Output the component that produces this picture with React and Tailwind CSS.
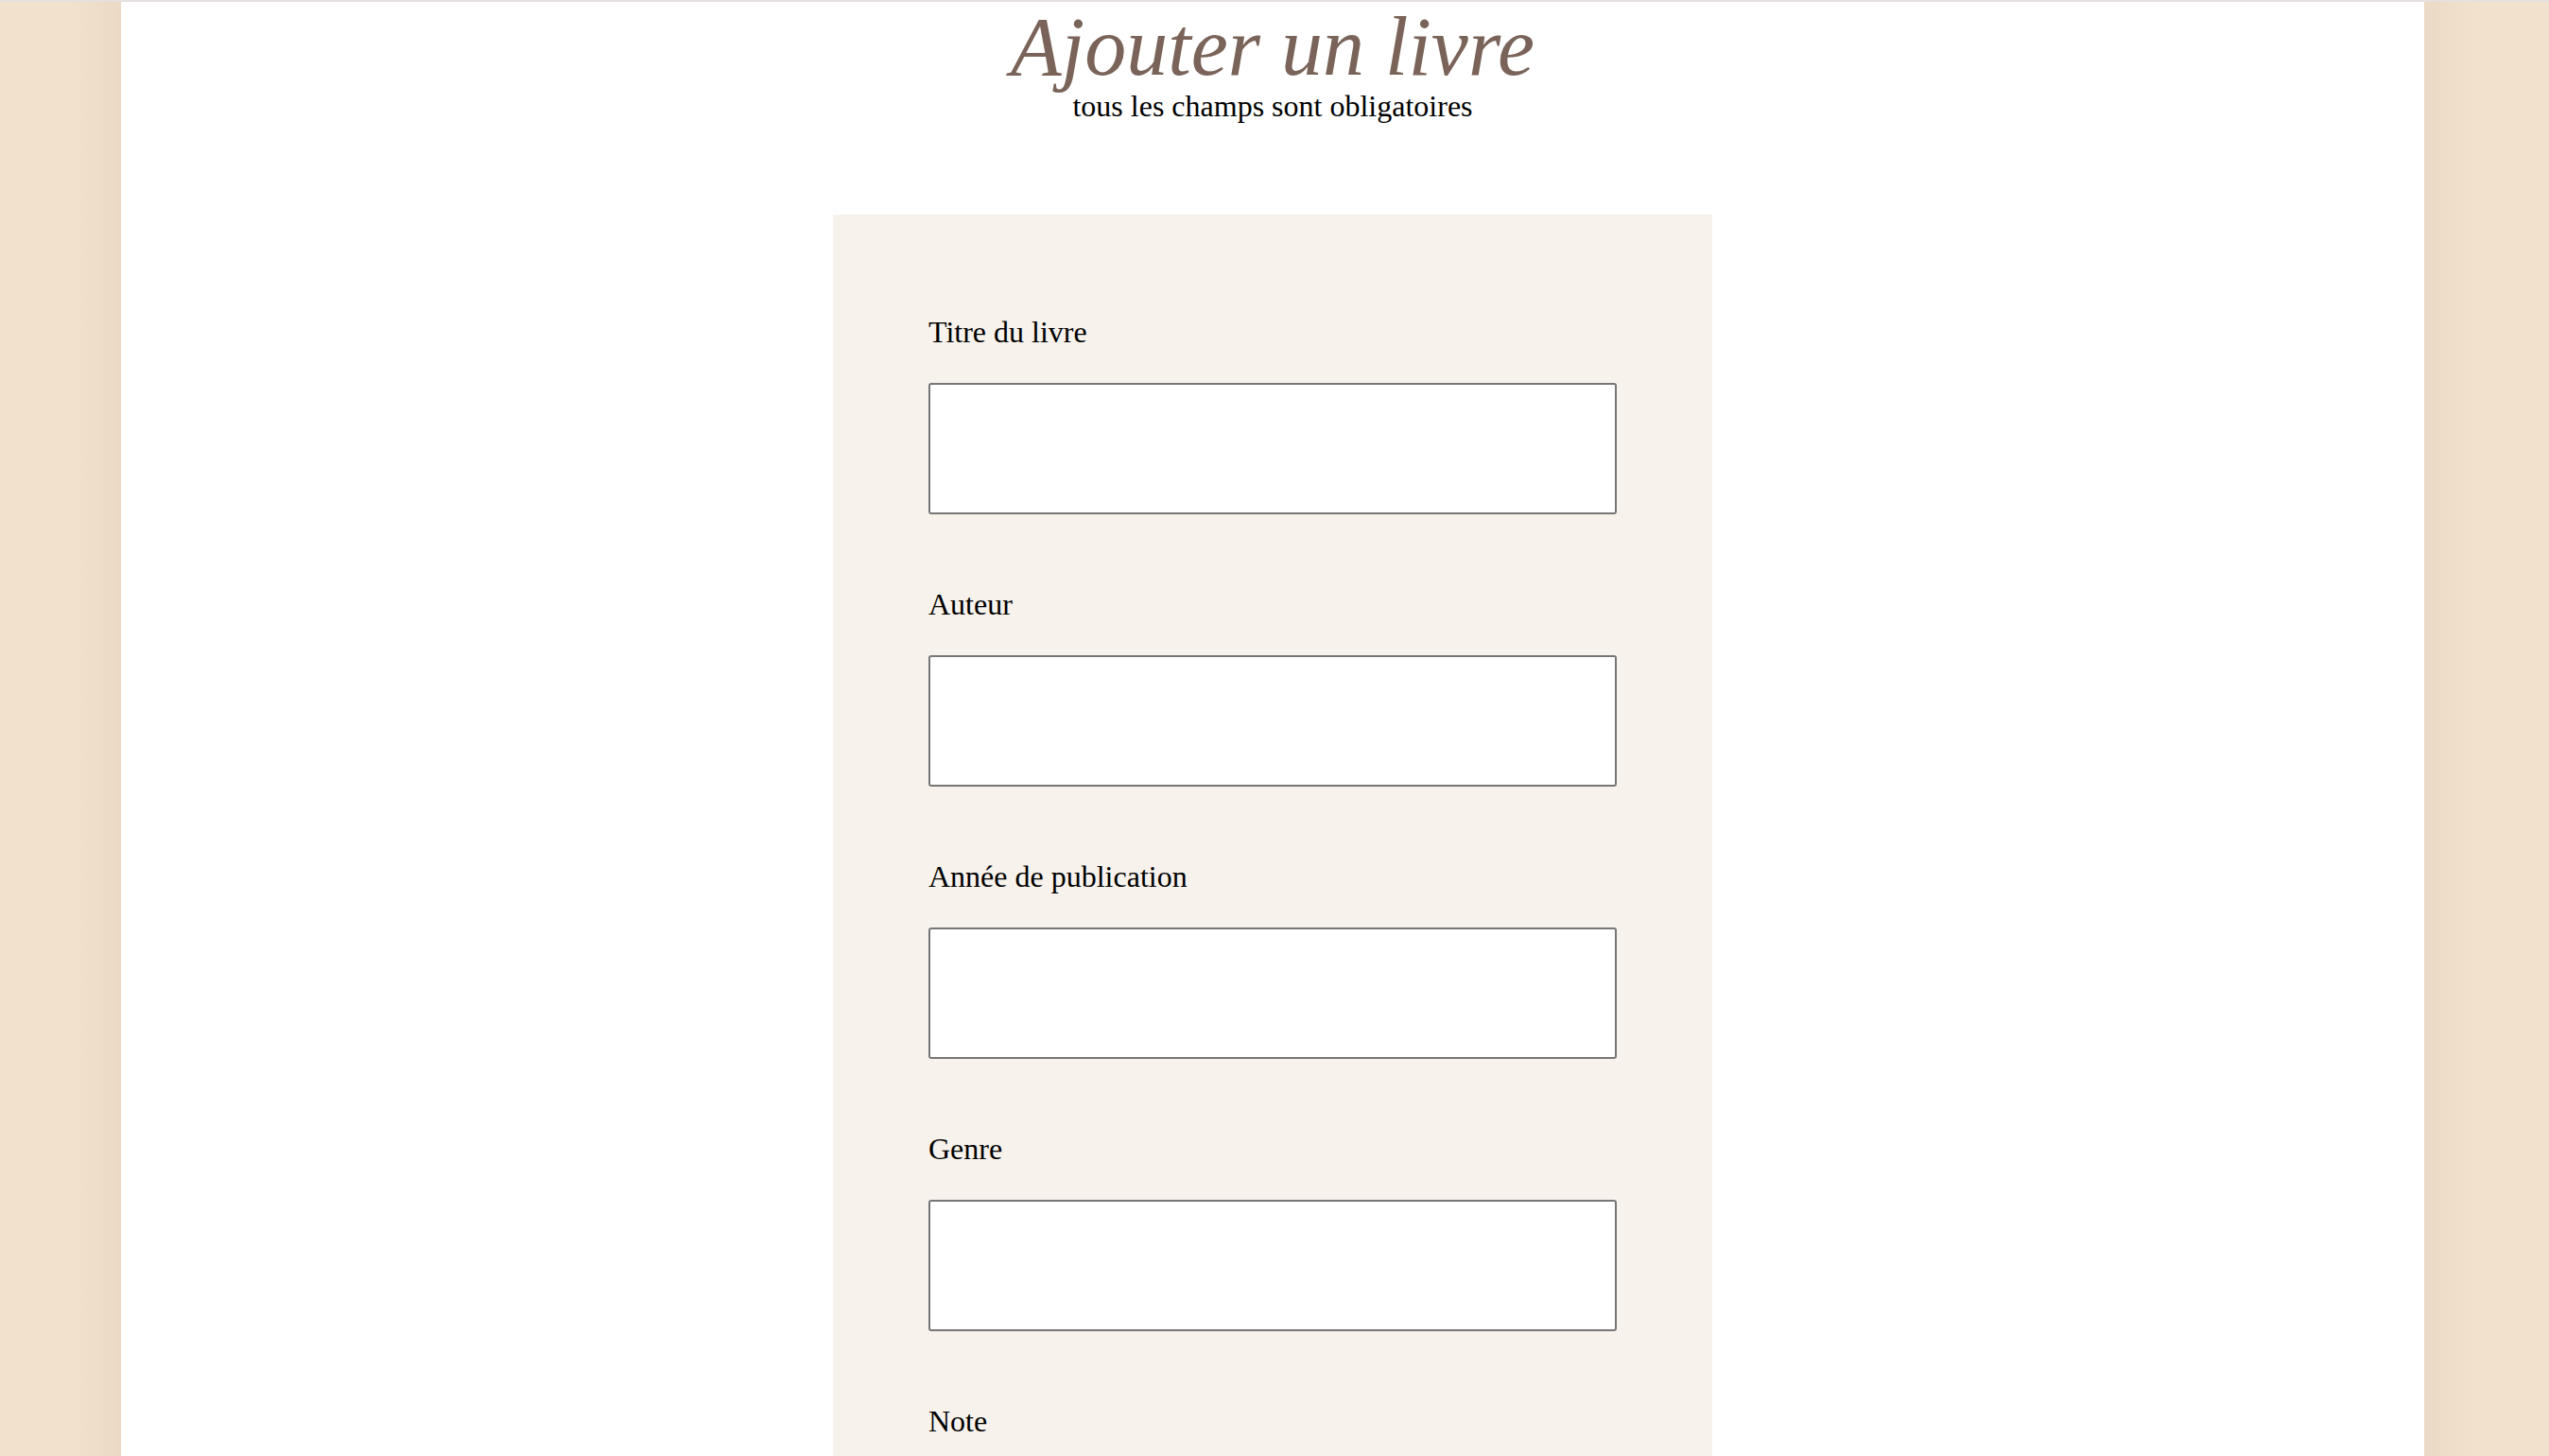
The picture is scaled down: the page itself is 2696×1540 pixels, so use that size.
const fields = [
  { id: "titre", label: "Titre du livre", type: "text" },
  { id: "auteur", label: "Auteur", type: "text" },
  { id: "annee", label: "Année de publication", type: "text" },
  { id: "genre", label: "Genre", type: "text" },
  { id: "note", label: "Note", type: "text" },
];

const Field = ({ field }) => (
  <div className="flex flex-col pb-[77px]">
    <label htmlFor={field.id} className="text-[32px] leading-[36px] text-black">
      {field.label}
    </label>
    <input
      id={field.id}
      type={field.type}
      className="mt-[36px] h-[139px] w-full rounded-[3px] border-2 border-[#767676] bg-white"
    />
  </div>
);

const App = () => {
  return (
    <div
      className="min-h-screen grid grid-cols-[128px_1fr_132px] border-t-2 border-[#e6e0e0]"
      style={{ fontFamily: '"Liberation Serif", "Times New Roman", serif' }}
    >
      <div className="bg-gradient-to-r from-[#f2e2cd] from-60% to-[#ebd9c5]" />
      <main className="bg-white flex flex-col items-center">
        <h1 className="mt-[4px] text-[88px] leading-[88px] italic text-[#7a6358]">
          Ajouter un livre
        </h1>
        <p className="text-[32px] leading-[36px] text-black">
          tous les champs sont obligatoires
        </p>
        <form className="mt-[97px] w-[930px] bg-[#f7f2ec] px-[101px] pt-[106px]">
          {fields.map((field) => (
            <Field key={field.id} field={field} />
          ))}
        </form>
      </main>
      <div className="bg-gradient-to-l from-[#f2e2cd] from-60% to-[#ebd9c5]" />
    </div>
  );
};

export default App;
